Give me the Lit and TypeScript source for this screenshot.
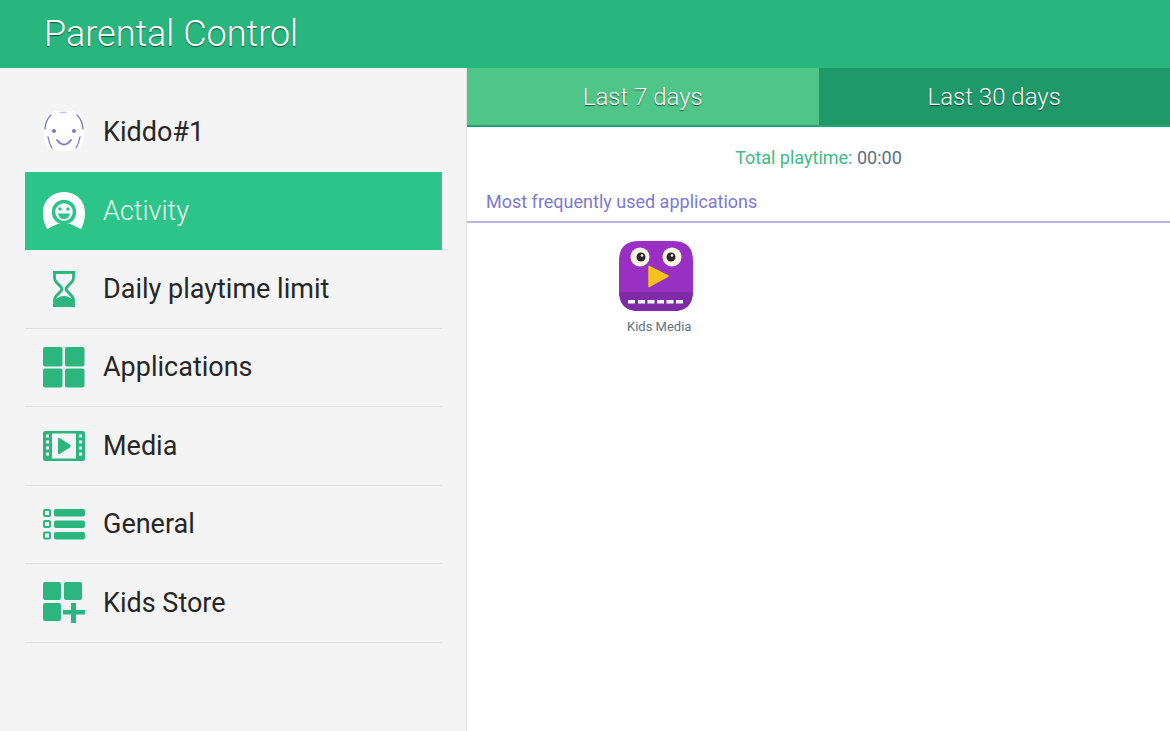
import { LitElement, html, css, svg } from 'lit';
import { customElement } from 'lit/decorators.js';

const GREEN = '#2bb680';

const icons: Record<string, unknown> = {
  kiddo: svg`<svg width="44" height="44" viewBox="0 0 44 44">
    <rect x="2" y="1" width="40" height="40" rx="14" fill="#fff"/>
    <g fill="none" stroke="#7d77cc" stroke-width="1.3" stroke-linecap="round">
      <path d="M9 5 Q3.500 10 3 19"/>
      <path d="M35 5 Q40.500 10 41 19"/>
      <path d="M6 27 Q7 33 10 38" />
      <path d="M38 27 Q37 33 34 38" />
      <path d="M15 30 Q22 39 29 30" stroke-width="1.800"/>
      <path d="M18 2.500 L24 2.500" stroke="#c9c6ea"/>
    </g>
    <circle cx="12" cy="21" r="2" fill="#7d77cc"/>
    <circle cx="32" cy="21" r="2" fill="#7d77cc"/>
  </svg>`,
  activity: svg`<svg width="44" height="40" viewBox="0 0 44 40">
    <path d="M22 1 C10 1 1 10 1 21 C1 27 2 33 5 38 C10 36 15 32 22 32 C29 32 34 36 39 38 C42 33 43 27 43 21 C43 10 34 1 22 1 Z" fill="#fff"/>
    <circle cx="22" cy="21" r="10.500" fill="none" stroke="#2dc48a" stroke-width="3.500"/>
    <circle cx="18" cy="18" r="1.800" fill="#2dc48a"/>
    <circle cx="26" cy="18" r="1.800" fill="#2dc48a"/>
    <path d="M16 22.500 H28 C27.500 26 25 28 22 28 C19 28 16.500 26 16 22.500 Z" fill="#2dc48a"/>
  </svg>`,
  limit: svg`<svg width="44" height="36" viewBox="0 0 44 36" fill="none" stroke="${GREEN}" stroke-width="2.800">
    <path d="M11 1.500 H33 M11 34.500 H33" stroke-width="3"/>
    <path d="M12.500 2 V7 C12.500 12 20 15 20 18 C20 21 12.500 24 12.500 29 V34 M31.500 2 V7 C31.500 12 24 15 24 18 C24 21 31.500 24 31.500 29 V34"/>
    <path d="M13 33 V29 C16 26 19 25 22 25 C25 25 28 26 31 29 V33 Z" fill="${GREEN}" stroke="none"/>
    <path d="M14 6 H30 C29 10 25 13 22 15 C19 13 15 10 14 6 Z" fill="#f4f4f4" stroke="none"/>
  </svg>`,
  apps: svg`<svg width="44" height="42" viewBox="0 0 44 42" fill="${GREEN}">
    <rect x="1" y="1" width="19.500" height="19.500" rx="2"/>
    <rect x="23" y="1" width="19.500" height="19.500" rx="2"/>
    <rect x="1" y="22.500" width="19.500" height="19" rx="2"/>
    <rect x="23" y="22.500" width="19.500" height="19" rx="2"/>
  </svg>`,
  media: svg`<svg width="44" height="32" viewBox="0 0 44 32">
    <rect x="1" y="1" width="42" height="30" rx="2.500" fill="${GREEN}"/>
    <rect x="10" y="3.500" width="24" height="25" fill="#f4f4f4"/>
    <path d="M16 9 Q16 7.500 17.500 8 L28 14.500 Q29.500 16 28 17.500 L17.500 24 Q16 24.500 16 23 Z" fill="${GREEN}"/>
    <g fill="#f4f4f4">
      <rect x="4" y="4.500" width="3" height="3"/><rect x="4" y="10.500" width="3" height="3"/>
      <rect x="4" y="16.500" width="3" height="3"/><rect x="4" y="22.500" width="3" height="3"/>
      <rect x="37" y="4.500" width="3" height="3"/><rect x="37" y="10.500" width="3" height="3"/>
      <rect x="37" y="16.500" width="3" height="3"/><rect x="37" y="22.500" width="3" height="3"/>
    </g>
  </svg>`,
  general: svg`<svg width="44" height="32" viewBox="0 0 44 32" fill="${GREEN}">
    <rect x="12" y="1" width="31" height="7.500" rx="2"/>
    <rect x="12" y="12.500" width="31" height="7.500" rx="2"/>
    <rect x="12" y="24" width="31" height="7.500" rx="2"/>
    <g fill="none" stroke="${GREEN}" stroke-width="2">
      <rect x="2" y="2" width="6" height="6" rx="1"/>
      <rect x="2" y="13" width="6" height="6" rx="1"/>
      <rect x="2" y="24.500" width="6" height="6" rx="1"/>
    </g>
  </svg>`,
  store: svg`<svg width="44" height="42" viewBox="0 0 44 42" fill="${GREEN}">
    <rect x="1" y="0" width="18" height="18" rx="2"/>
    <rect x="22" y="0" width="18" height="18" rx="2"/>
    <rect x="1" y="21" width="18" height="18" rx="2"/>
    <path d="M29 21 H34 V28 H43 V32.500 H34 V41 H29 V32.500 H21 V28 H29 Z"/>
  </svg>`,
};

const menu = [
  { id: 'kiddo', label: 'Kiddo#1' },
  { id: 'activity', label: 'Activity', active: true },
  { id: 'limit', label: 'Daily playtime limit' },
  { id: 'apps', label: 'Applications' },
  { id: 'media', label: 'Media' },
  { id: 'general', label: 'General' },
  { id: 'store', label: 'Kids Store' },
];

@customElement('app-root')
export class AppRoot extends LitElement {
  static styles = css`
    :host {
      display: block;
      width: 1170px;
      height: 731px;
      overflow: hidden;
      font-family: Roboto, "Liberation Sans", sans-serif;
      background: #fff;
    }
    .top {
      height: 68px;
      background: #29b67e;
      display: flex;
      align-items: center;
      padding-left: 44px;
      color: #fff;
      font-size: 36px;
      font-weight: 300;
      text-shadow: 0 1px 1px rgba(0, 0, 0, 0.55);
      padding-bottom: 1px;
      box-sizing: border-box;
    }
    .body {
      display: flex;
      height: 663px;
    }
    .side {
      width: 467px;
      box-sizing: border-box;
      background: #f4f4f4;
      border-right: 1px solid #e4e4e4;
      padding: 25px 24px 0 25px;
    }
    .item {
      height: 78.500px;
      box-sizing: border-box;
      display: flex;
      align-items: center;
      border-bottom: 1px solid #e0e0e0;
      font-size: 27px;
      color: #262626;
    }
    .item:first-child {
      border-bottom: none;
    }
    .item.active {
      background: #2dc48a;
      color: #e9f8f1;
      font-weight: 300;
      border-bottom: none;
    }
    .icon {
      width: 78px;
      padding-left: 17px;
      box-sizing: border-box;
      display: flex;
      flex-shrink: 0;
    }
    .icon svg {
      display: block;
    }
    .main {
      flex: 1;
      display: flex;
      flex-direction: column;
    }
    .tabs {
      display: flex;
      height: 59px;
      box-sizing: border-box;
      color: #fff;
      font-size: 24px;
      font-weight: 300;
      text-shadow: 0 1px 1px rgba(0, 0, 0, 0.6);
    }
    .tab {
      flex: 1;
      display: flex;
      align-items: center;
      justify-content: center;
      border-bottom: 2px solid #25a070;
    }
    .tab.on {
      background: #4fc588;
    }
    .tab.off {
      background: #20996a;
    }
    .total {
      text-align: center;
      font-size: 18px;
      color: #3dbb88;
      margin-top: 20px;
      line-height: 22px;
    }
    .total span {
      color: #5a7085;
    }
    .heading {
      margin-top: 22px;
      height: 32px;
      box-sizing: border-box;
      padding-left: 19px;
      font-size: 18px;
      line-height: 22px;
      color: #7d79d0;
      border-bottom: 2px solid #b9b6e4;
    }
    .apps {
      padding: 18px 0 0 152px;
    }
    .app {
      width: 82px;
      display: flex;
      flex-direction: column;
      align-items: flex-start;
    }
    .app svg {
      display: block;
    }
    .app-name {
      font-size: 13px;
      color: #5e7382;
      margin: 8px 0 0 8px;
      white-space: nowrap;
      line-height: 15px;
    }
  `;

  render() {
    return html`
      <div class="top">Parental Control</div>
      <div class="body">
        <div class="side">
          ${menu.map(
            (m) => html`
              <div class="item ${m.active ? 'active' : ''}">
                <div class="icon">${icons[m.id]}</div>
                <div>${m.label}</div>
              </div>
            `,
          )}
        </div>
        <div class="main">
          <div class="tabs">
            <div class="tab on">Last 7 days</div>
            <div class="tab off">Last 30 days</div>
          </div>
          <div class="total">Total playtime: <span>00:00</span></div>
          <div class="heading">Most frequently used applications</div>
          <div class="apps">
            <div class="app">
              <svg width="74" height="70" viewBox="0 0 74 70">
                <path d="M20 0 H54 C68 0 74 7 74 20 V50 C74 63 68 70 54 70 H20 C6 70 0 63 0 50 V20 C0 7 6 0 20 0 Z" fill="#9a2fc4"/>
                <path d="M0 51 H74 C73 64 67 70 54 70 H20 C7 70 1 64 0 51 Z" fill="#7f2aa6"/>
                <g fill="#fff">
                  <rect x="9" y="59" width="7" height="3.500"/><rect x="19" y="59" width="7" height="3.500"/>
                  <rect x="28.500" y="59" width="7" height="3.500"/><rect x="38" y="59" width="7" height="3.500"/>
                  <rect x="47.500" y="59" width="7" height="3.500"/><rect x="57" y="59" width="7" height="3.500"/>
                </g>
                <circle cx="21" cy="16" r="9.500" fill="#fbf6e0"/>
                <circle cx="53" cy="16" r="9.500" fill="#fbf6e0"/>
                <circle cx="22" cy="16" r="4.500" fill="#2a2430"/>
                <circle cx="52" cy="16" r="4.500" fill="#2a2430"/>
                <circle cx="23" cy="14.500" r="1.300" fill="#fff"/>
                <circle cx="53" cy="14.500" r="1.300" fill="#fff"/>
                <path d="M30 25.500 L49 35 L30 45.500 Z" fill="#f7c11b" stroke="#f7c11b" stroke-width="1.500" stroke-linejoin="round"/>
              </svg>
              <div class="app-name">Kids Media</div>
            </div>
          </div>
        </div>
      </div>
    `;
  }
}
